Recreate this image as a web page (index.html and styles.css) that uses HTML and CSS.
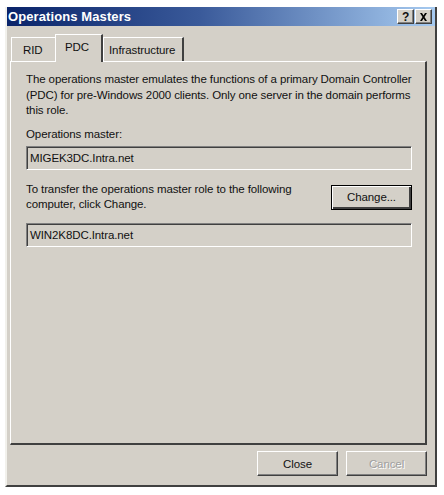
FILE: index.html
```html
<!DOCTYPE html>
<html lang="en">
<head>
    <meta charset="UTF-8">
    <meta name="viewport" content="width=device-width, initial-scale=1.0">
    <title>Operations Masters</title>
    <link rel="stylesheet" href="styles.css">
</head>
<body>
    <div class="dialog">
        <div class="titlebar">
            <span class="title">Operations Masters</span>
            <div class="title-buttons">
                <span class="tbtn">?</span>
                <span class="tbtn close">
                    <svg width="9" height="8" viewBox="0 0 9 8"><path d="M1 0h2l1.5 2.5L6 0h2L5.5 4 8 8H6L4.5 5.5 3 8H1l2.5-4z" fill="#000"/></svg>
                </span>
            </div>
        </div>

        <div class="content">
            <div class="tabs">
                <div class="tab">RID</div>
                <div class="tab active">PDC</div>
                <div class="tab">Infrastructure</div>
            </div>

            <div class="panel">
                <p class="desc">The operations master emulates the functions of a primary Domain Controller (PDC) for pre-Windows 2000 clients. Only one server in the domain performs this role.</p>

                <p class="label">Operations master:</p>
                <div class="field">MIGEK3DC.Intra.net</div>

                <div class="transfer">
                    <p>To transfer the operations master role to the following computer, click Change.</p>
                    <button class="btn default">Change...</button>
                </div>
                <div class="field second">WIN2K8DC.Intra.net</div>
            </div>

            <div class="footer">
                <button class="btn">Close</button>
                <button class="btn disabled">Cancel</button>
            </div>
        </div>
    </div>
</body>
</html>
```

FILE: styles.css
```css
* {
    box-sizing: border-box;
    margin: 0;
    padding: 0;
}

body {
    background: #ffffff;
    font-family: 'Liberation Sans', Arial, sans-serif;
    font-size: 11.5px;
    letter-spacing: -0.1px;
    color: #111;
}

.dialog {
    margin: 7px 0 0 5px;
    width: 432px;
    height: 480px;
    background: #d4d0c8;
    border-left: 2px solid #f2f1ec;
    border-right: 2px solid #404040;
    border-bottom: 2px solid #404040;
    display: flex;
    flex-direction: column;
}

.titlebar {
    height: 19px;
    background: linear-gradient(90deg, #0a246a 0%, #3a5a9a 45%, #a6caf0 100%);
    display: flex;
    align-items: center;
    justify-content: space-between;
    padding: 0 3px 0 1px;
}

.title {
    color: #fff;
    font-weight: bold;
    font-size: 13px;
    letter-spacing: 0.1px;
}

.title-buttons {
    display: flex;
    gap: 1px;
}

.tbtn {
    width: 17px;
    height: 15px;
    background: #d4d0c8;
    border: 1px solid;
    border-color: #fff #404040 #404040 #fff;
    box-shadow: inset -1px -1px 0 #808080;
    display: flex;
    align-items: center;
    justify-content: center;
    font-weight: bold;
    font-size: 12px;
    line-height: 1;
}

.content {
    flex: 1;
    display: flex;
    flex-direction: column;
    padding: 7px 8px 0 3px;
}

.tabs {
    display: flex;
    align-items: flex-end;
    height: 28px;
    padding-left: 1px;
    position: relative;
    z-index: 1;
}

.tab {
    height: 24px;
    padding: 0 9px;
    display: flex;
    align-items: center;
    border-top: 1px solid #fff;
    border-left: 1px solid #fff;
    border-right: 2px solid #404040;
}

.tab:first-child {
    width: 44px;
    padding-left: 11px;
    border-right: none;
}

.tab.active {
    height: 28px;
    width: 48px;
    padding: 0 0 4px 9px;
    border-right: 2px solid #404040;
    margin-bottom: -1px;
    background: #d4d0c8;
}

.tab:last-child {
    width: 81px;
    padding-left: 5px;
}

.panel {
    height: 384px;
    border-top: 1px solid #fff;
    border-left: 1px solid #fff;
    border-right: 2px solid #404040;
    border-bottom: 2px solid #404040;
    padding: 10px 10px 0 15px;
}

.desc {
    line-height: 15.5px;
}

.label {
    margin-top: 8px;
    line-height: 15px;
}

.field {
    margin-top: 4px;
    height: 24px;
    width: 386px;
    border: 1px solid;
    border-color: #808080 #fff #fff #808080;
    box-shadow: inset 1px 1px 0 #404040;
    padding: 0 3px;
    display: flex;
    align-items: center;
}

.field.second {
    margin-top: 11px;
}

.transfer {
    margin-top: 12px;
    display: flex;
    justify-content: space-between;
    align-items: flex-start;
    width: 386px;
}

.transfer p {
    width: 290px;
    line-height: 15px;
}

.btn {
    font-family: inherit;
    font-size: 11.5px;
    letter-spacing: -0.1px;
    color: #111;
    background: #d4d0c8;
    width: 81px;
    height: 25px;
    border: 1px solid;
    border-color: #fff #404040 #404040 #fff;
    box-shadow: inset -1px -1px 0 #808080;
}

.btn.default {
    margin-top: 3px;
    border: 1px solid #000;
    box-shadow: inset 1px 1px 0 #fff, inset -2px -2px 0 #404040;
}

.footer {
    display: flex;
    justify-content: flex-end;
    gap: 8px;
    padding-top: 6px;
}

.btn.disabled {
    color: #a0a0a0;
    text-shadow: 1px 1px 0 #fff;
}
```
